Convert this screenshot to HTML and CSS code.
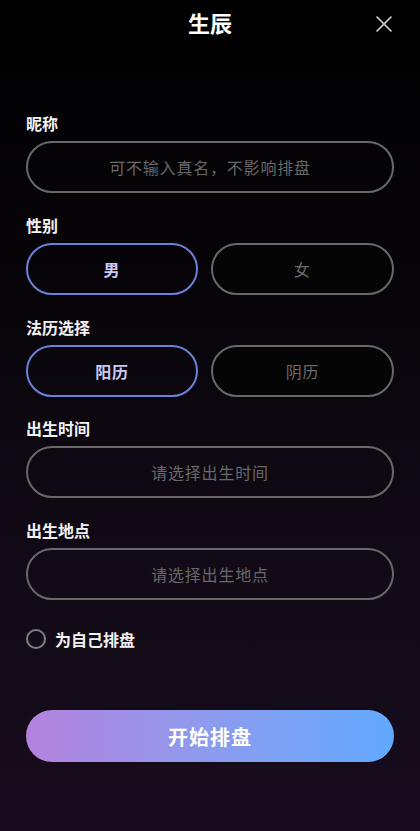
FILE: index.html
```html
<!DOCTYPE html>
<html lang="zh-CN">

<head>
    <meta charset="UTF-8">
    <meta name="viewport" content="width=device-width, initial-scale=1">
    <title>生辰</title>
    <link rel="stylesheet" href="styles.css">
</head>

<body>
<div class="page">
    <!-- header -->
    <div class="header">
        <div class="header-title">生辰</div>
        <div class="closeTag">
            <svg width="16" height="16" viewBox="0 0 16 16">
                <path d="M1 1 L15 15 M15 1 L1 15" stroke="#d8d8d8" stroke-width="1.6" fill="none" stroke-linecap="round"/>
            </svg>
        </div>
    </div>

    <!-- form -->
    <div class="form">
        <div class="field">
            <div class="field-label">昵称</div>
            <div class="pill">可不输入真名，不影响排盘</div>
        </div>

        <div class="field">
            <div class="field-label">性别</div>
            <div class="choice">
                <div class="pill active">男</div>
                <div class="pill dim">女</div>
            </div>
        </div>

        <div class="field">
            <div class="field-label">法历选择</div>
            <div class="choice">
                <div class="pill active">阳历</div>
                <div class="pill dim">阴历</div>
            </div>
        </div>

        <div class="field">
            <div class="field-label">出生时间</div>
            <div class="pill">请选择出生时间</div>
        </div>

        <div class="field">
            <div class="field-label">出生地点</div>
            <div class="pill">请选择出生地点</div>
        </div>

        <div class="self-row">
            <span class="radio"></span>
            <span class="self-text">为自己排盘</span>
        </div>

        <div class="submit">开始排盘</div>
    </div>
</div>
</body>

</html>
```

FILE: styles.css
```css
html,
body {
    margin: 0;
    padding: 0;
}

body {
    width: 420px;
    height: 831px;
    background: linear-gradient(180deg, #000 0%, #08050a 35%, #120a17 70%, #170c1d 100%);
    font-family: "Noto Sans CJK SC", "Noto Sans", sans-serif;
    color: #fff;
    overflow: hidden;
}

.page {
    padding: 0 26px;
}

.header {
    height: 46px;
    position: relative;
    display: flex;
    align-items: center;
    justify-content: center;
}

.header-title {
    font-size: 22px;
    font-weight: 700;
    line-height: 40px;
    margin-top: -3px;
    color: #fff;
}

.closeTag {
    width: 16px;
    height: 16px;
    position: absolute;
    top: 16px;
    right: 2px;
}

.closeTag svg {
    display: block;
}

.form {
    padding-top: 67px;
}

.field {
    margin-bottom: 21.75px;
}

.field-label {
    height: 20px;
    line-height: 20px;
    font-size: 16px;
    font-weight: 700;
    color: #f2f2f2;
    margin-bottom: 8px;
}

.pill {
    height: 52px;
    box-sizing: border-box;
    border: 2px solid #686868;
    border-radius: 26px;
    display: flex;
    align-items: center;
    justify-content: center;
    font-size: 16px;
    color: #686868;
    letter-spacing: 0.8px;
}

.choice {
    display: grid;
    grid-template-columns: 172px 1fr;
    gap: 13px;
}

.pill.active {
    border-color: #6b80d8;
    color: #c9cbf6;
    font-weight: 700;
}

.pill.dim {
    background-color: #050505;
    color: #6a6a6a;
}

.self-row {
    display: flex;
    align-items: center;
    margin-top: 27px;
    height: 24px;
}

.radio {
    width: 20px;
    height: 20px;
    box-sizing: border-box;
    border: 2px solid #808080;
    border-radius: 50%;
    margin-right: 9px;
}

.self-text {
    font-size: 16px;
    font-weight: 700;
    color: #f2f2f2;
}

.submit {
    margin-top: 59px;
    height: 52px;
    border-radius: 26px;
    background: linear-gradient(90deg, #b482de 0%, #8d9bee 50%, #61a9fe 100%);
    display: flex;
    align-items: center;
    justify-content: center;
    font-size: 20px;
    font-weight: 700;
    color: #fff;
    letter-spacing: 1px;
}
```
